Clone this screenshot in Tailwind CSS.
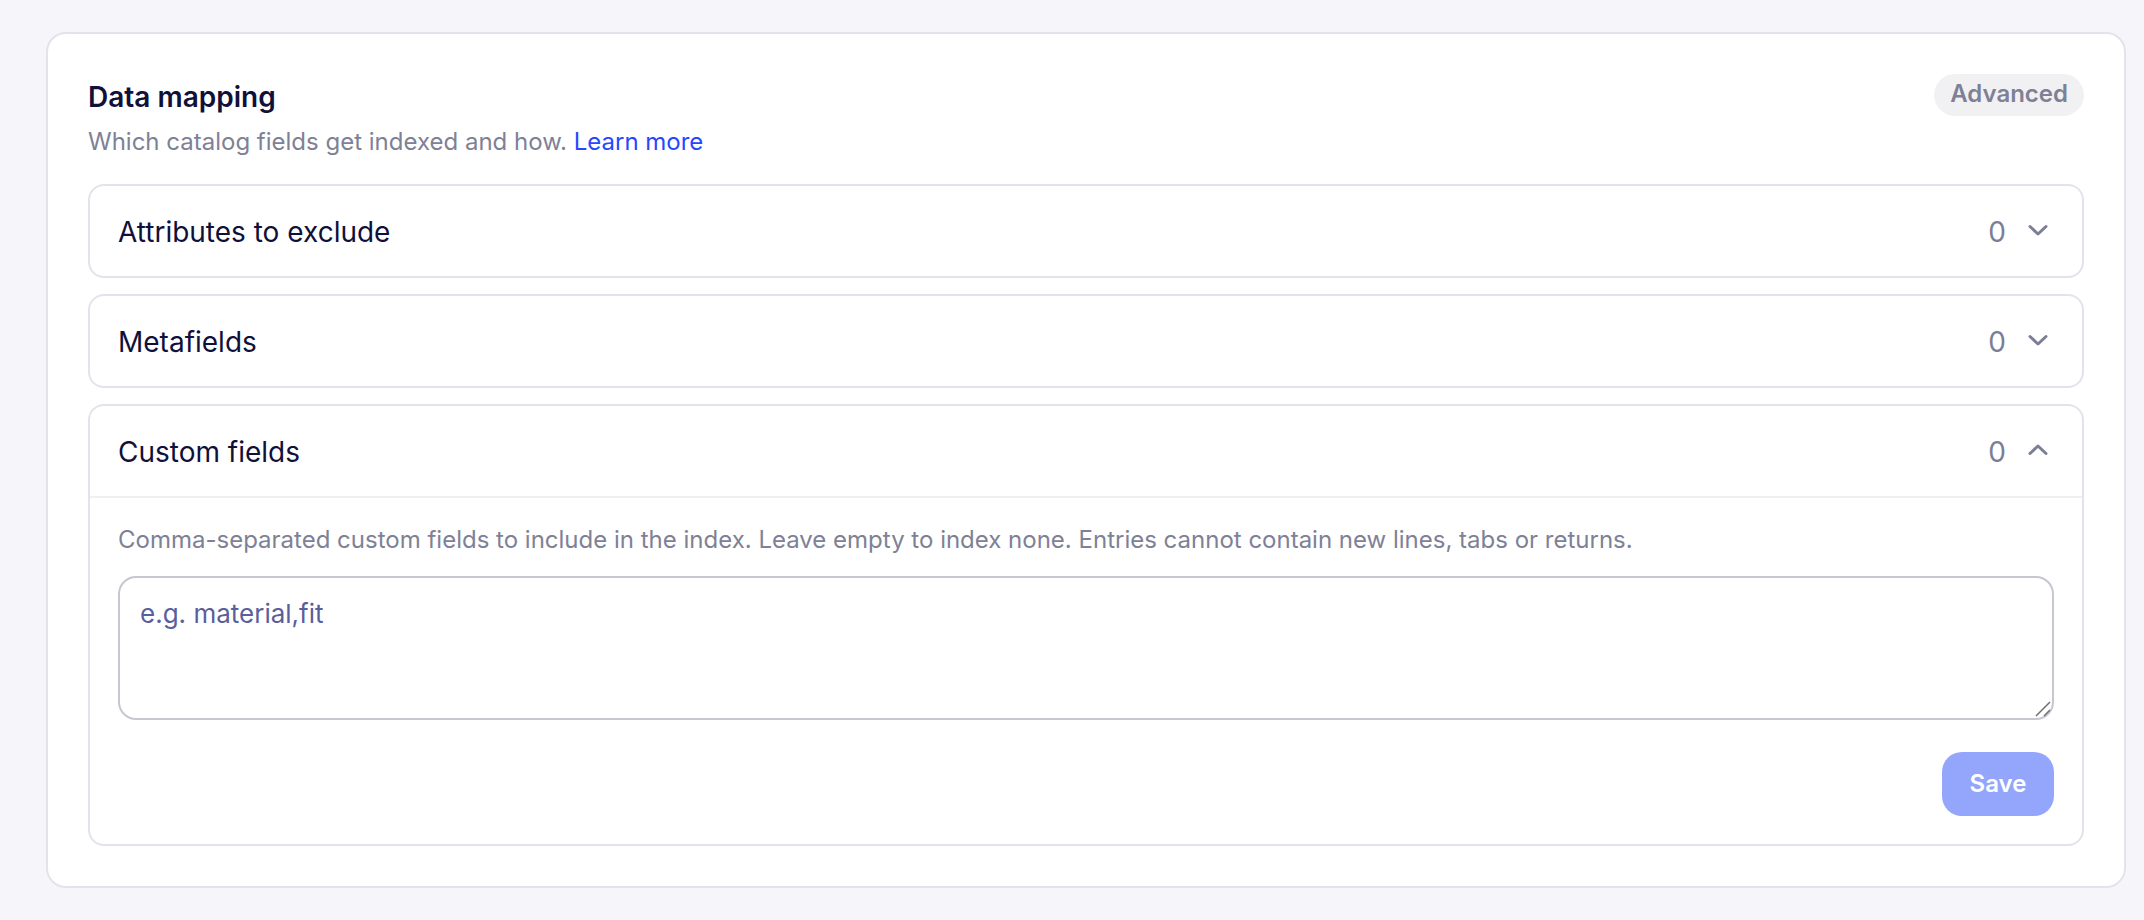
<!DOCTYPE html>
<html lang="en">
<head>
  <meta charset="UTF-8">
  <title>Data mapping</title>
  <script src="https://cdn.jsdelivr.net/npm/@tailwindcss/browser@4"></script>
</head>
<body class="bg-[#f5f5fa] font-['Inter',sans-serif] text-[#10103a] antialiased">
  <div class="px-[46px] pt-[32px]">
    <section class="h-[856px] w-[2080px] rounded-[20px] border-2 border-[#e3e3eb] bg-white px-[40px] pt-[40px]">
      <!-- Header -->
      <div class="flex items-start justify-between">
        <div class="pt-[5px]">
          <h2 class="text-[28px] leading-[36px] font-semibold">Data mapping</h2>
          <p class="mt-[9px] text-[24px] leading-[36px] text-[#7e8196]">Which catalog fields get indexed and how. <a href="#" class="text-[#2647ff]">Learn more</a></p>
        </div>
        <span class="rounded-full bg-[#f1f1f3] px-[16px] text-[24px] leading-[40px] pb-[2px] font-semibold text-[#7e8196]">Advanced</span>
      </div>

      <div class="mt-[24px] flex flex-col gap-[16px]">
        <!-- Attributes -->
        <div class="flex h-[94px] items-center justify-between rounded-[16px] border-2 border-[#e3e3eb] px-[28px] pt-[2px]">
          <span class="text-[28px]">Attributes to exclude</span>
          <div class="flex items-center gap-[20px] text-[#7a7e96]">
            <span class="text-[28px]">0</span>
            <svg class="mr-[4px] mb-[4px] h-[24px] w-[24px]" viewBox="0 0 24 24" fill="none" stroke="currentColor" stroke-width="3" stroke-linecap="round" stroke-linejoin="round"><path d="M4 8.5l8 7.5 8-7.5"/></svg>
          </div>
        </div>

        <!-- Metafields -->
        <div class="flex h-[94px] items-center justify-between rounded-[16px] border-2 border-[#e3e3eb] px-[28px] pt-[2px]">
          <span class="text-[28px]">Metafields</span>
          <div class="flex items-center gap-[20px] text-[#7a7e96]">
            <span class="text-[28px]">0</span>
            <svg class="mr-[4px] mb-[4px] h-[24px] w-[24px]" viewBox="0 0 24 24" fill="none" stroke="currentColor" stroke-width="3" stroke-linecap="round" stroke-linejoin="round"><path d="M4 8.5l8 7.5 8-7.5"/></svg>
          </div>
        </div>

        <!-- Custom fields -->
        <div class="h-[442px] rounded-[16px] border-2 border-[#e3e3eb]">
          <div class="flex h-[92px] items-center justify-between border-b-2 border-[#efeff4] px-[28px] pt-[2px]">
            <span class="text-[28px]">Custom fields</span>
            <div class="flex items-center gap-[20px] text-[#7a7e96]">
              <span class="text-[28px]">0</span>
              <svg class="mr-[4px] mb-[4px] h-[24px] w-[24px]" viewBox="0 0 24 24" fill="none" stroke="currentColor" stroke-width="3" stroke-linecap="round" stroke-linejoin="round"><path d="M4 15.5l8-7.5 8 7.5"/></svg>
            </div>
          </div>
          <div class="px-[28px] pt-[25px]">
            <p class="text-[24px] leading-[34px] text-[#7e8196]">Comma-separated custom fields to include in the index. Leave empty to index none. Entries cannot contain new lines, tabs or returns.</p>
            <div class="relative mt-[19px]">
              <textarea placeholder="e.g. material,fit" class="block h-[144px] w-full resize-none rounded-[18px] border-2 border-[#c6c7d0] px-[20px] py-[18px] text-[26px] leading-[36px] placeholder:text-[#5a5e9c]"></textarea>
              <!-- resize grip -->
              <svg class="absolute right-[2px] bottom-[2px] h-[18px] w-[18px]" viewBox="0 0 18 18" fill="none" stroke="#6f6f6f" stroke-width="1.5"><path d="M2 16L16 2M10 16l6-6"/></svg>
            </div>
            <div class="mt-[32px] flex justify-end">
              <button class="h-[64px] w-[112px] rounded-[20px] bg-[#94a6fb] text-[24px] font-semibold text-white">Save</button>
            </div>
          </div>
        </div>
      </div>
    </section>
  </div>
</body>
</html>
